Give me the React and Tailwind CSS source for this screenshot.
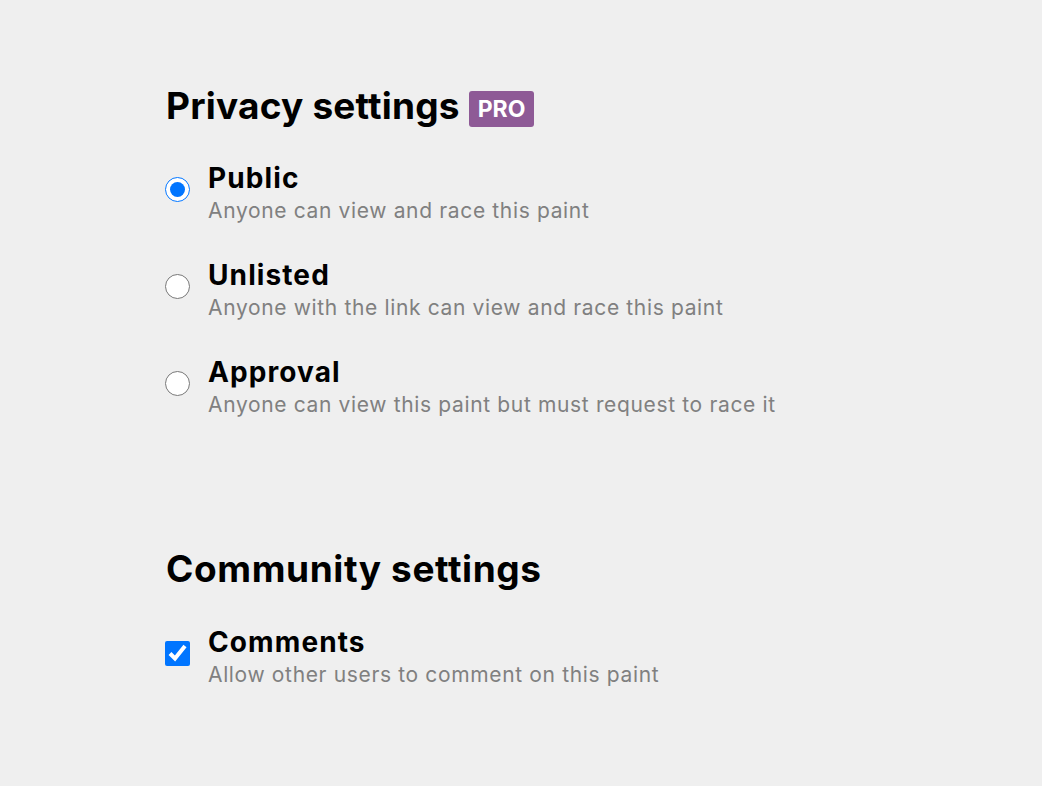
import React from "react";

const font = { fontFamily: '"Inter", "Noto Sans", sans-serif' };

function Option({ type, name, checked, title, desc }) {
  return (
    <label className="flex items-start gap-[18px]">
      <input
        type={type}
        name={name}
        defaultChecked={checked}
        className="mt-[15px] ml-[-1px] h-[25px] w-[25px] shrink-0 accent-[#0075ff]"
      />
      <div className="flex flex-col">
        <span className="text-[28px] font-bold leading-[33px] tracking-[1.1px] text-[#000]">{title}</span>
        <span className="text-[21px] leading-[32px] tracking-[0.65px] text-[#808080]">{desc}</span>
      </div>
    </label>
  );
}

export default function App() {
  return (
    <div className="min-h-screen bg-[#efefef] pl-[166px] pt-[82px]" style={font}>
      <div className="flex items-center gap-[9px]">
        <h2 className="text-[37px] font-bold leading-[48px] tracking-[0.2px] text-black">Privacy settings</h2>
        <span className="mt-[6px] rounded-[3px] bg-[#8e5a96] px-[9px] text-[23px] font-bold leading-[36px] text-white">PRO</span>
      </div>
      <div className="mt-[32px] flex flex-col gap-[32px]">
        <Option type="radio" name="privacy" checked title="Public" desc="Anyone can view and race this paint" />
        <Option type="radio" name="privacy" title="Unlisted" desc="Anyone with the link can view and race this paint" />
        <Option type="radio" name="privacy" title="Approval" desc="Anyone can view this paint but must request to race it" />
      </div>
      <h2 className="mt-[124px] text-[37px] font-bold leading-[48px] tracking-[0.6px] text-black">Community settings</h2>
      <div className="mt-[33px]">
        <Option type="checkbox" name="comments" checked title="Comments" desc="Allow other users to comment on this paint" />
      </div>
    </div>
  );
}
